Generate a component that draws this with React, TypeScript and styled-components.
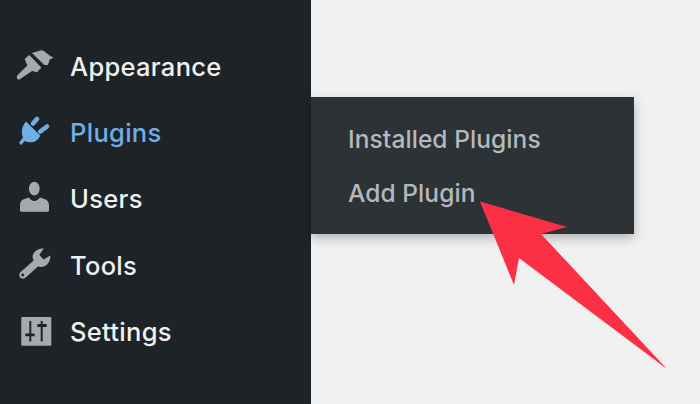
import React from "react";
import styled, { createGlobalStyle } from "styled-components";

const Global = createGlobalStyle`
  html, body { margin: 0; padding: 0; background: #f0f0f1; }
  body { font-family: Inter, "Liberation Sans", sans-serif; }
`;

const Page = styled.div`
  position: relative;
  width: 700px;
  height: 404px;
  overflow: hidden;
  display: flex;
  align-items: flex-start;
  background: #f0f0f1;
`;

const Sidebar = styled.nav`
  width: 311px;
  height: 404px;
  flex: none;
  box-sizing: border-box;
  padding: 33px 0 0 0;
  background: #1d2327;
  display: flex;
  flex-direction: column;
`;

const Row = styled.div<{ $active?: boolean }>`
  height: 66.3px;
  display: flex;
  align-items: center;
  gap: 16px;
  padding-left: 14px;
  color: ${(p) => (p.$active ? "#72aee6" : "#f0f0f1")};
  font-size: 25.5px;
  font-weight: 500;
  letter-spacing: 0.3px;
`;

const IconSlot = styled.svg<{ $active?: boolean }>`
  width: 40px;
  height: 40px;
  flex: none;
  color: ${(p) => (p.$active ? "#72aee6" : "#a7aaad")};
  fill: currentColor;
`;

const Flyout = styled.div`
  margin-top: 97px;
  width: 323px;
  height: 137px;
  box-sizing: border-box;
  padding: 15px 0 0 37px;
  background: #2d3237;
  box-shadow: 0 4px 10px rgba(0, 0, 0, 0.25);
  display: flex;
  flex-direction: column;
`;

const SubItem = styled.div`
  height: 54px;
  display: flex;
  align-items: center;
  color: #b4b9be;
  font-size: 24.5px;
  font-weight: 450;
  letter-spacing: 0.08px;
`;

const Arrow = styled.svg`
  position: absolute;
  left: 0;
  top: 0;
  width: 700px;
  height: 404px;
  fill: #fb3044;
  pointer-events: none;
`;

const icons = {
  Appearance: (
    <>
      <path d="M10.7 12.9 15.3 8.9 27.3 21.5 23 26.2 18 24.9 5.8 33.2C4.8 33.9 3.6 33.6 3 32.6 2.6 31.2 2.9 29.8 3.7 28.9L13.3 19.5Z" />
      <path d="M18 6.9 27.3 4.2C31 4.4 33 8.8 39.7 11.5L35.7 13.5 34 18.9 30.3 18.9Z" />
    </>
  ),
  Plugins: (
    <>
      <path d="M12 9.5 26.3 23.5C24.5 27.5 21.5 30 18 30.2 15.5 30.4 12.8 29.8 10.7 28.9L7.6 32.6C6.6 33.4 5.6 32 5.3 30.7 5.2 30.2 5.6 29.8 6 29.3L9 25.5C8 22.8 7.6 20.4 8 17.9 8.5 14.6 10 11.6 12 9.5Z" />
      <path d="M19 11.5 23 6.9M26.3 19.5 33 14.5" stroke="currentColor" strokeWidth="4.6" strokeLinecap="round" />
    </>
  ),
  Users: (
    <>
      <ellipse cx="20.3" cy="9.6" rx="5.4" ry="6.8" />
      <path d="M14.7 18.6C16.5 20.6 18.2 22 20.3 22 22.4 22 24.1 20.6 26 18.6L31 20.2C33.6 21 35 23.3 35 26.6V31.6C35 32.2 34.4 32.8 33.8 32.8H7.2C6.6 32.8 6 32.2 6 31.6V26.6C6 23.3 7.2 21 9.8 20.2Z" />
    </>
  ),
  Tools: (
    <path
      fillRule="evenodd"
      d="M6.3 27.3 19.7 15.6C18.6 13.2 18.5 12 18.7 10.6 19.4 7.6 21 6.2 23 5.2 25.2 4 27.4 3.6 29.7 3.6L25.3 10 29.7 14.6 36.3 10.6C36.5 13 35.9 15.4 34.7 17.3 33.4 19.6 31.8 21 29.7 21.6 27.8 22.2 25.8 22.2 24 21.6L12 32.3C10.5 33.9 8.4 34.2 6.7 33 4.9 31.6 4.8 29 6.3 27.3ZM8.7 28.6A1.4 1.4 0 1 0 8.71 31.4 1.4 1.4 0 0 0 8.7 28.6Z"
    />
  ),
  Settings: (
    <path
      fillRule="evenodd"
      d="M8.3 6H36.3C36.9 6 37.3 6.4 37.3 7V33.7C37.3 34.3 36.9 34.7 36.3 34.7H8.3C7.7 34.7 7.3 34.3 7.3 33.7V7C7.3 6.4 7.7 6 8.3 6ZM15.3 10V22.4H11.3V25.2H15.3V30.5H17.3V25.2H20.7V22.4H17.3V10ZM26.7 10V13H23.3V16H26.7V30.5H28.7V16H32.7V13H28.7V10Z"
    />
  ),
};

const items = ["Appearance", "Plugins", "Users", "Tools", "Settings"] as const;

export default function App() {
  return (
    <Page>
      <Global />
      <Sidebar>
        {items.map((name) => (
          <Row key={name} $active={name === "Plugins"}>
            <IconSlot viewBox="0 0 40 40" $active={name === "Plugins"}>
              {icons[name]}
            </IconSlot>
            {name}
          </Row>
        ))}
      </Sidebar>
      <Flyout>
        <SubItem>Installed Plugins</SubItem>
        <SubItem>Add Plugin</SubItem>
      </Flyout>
      <Arrow viewBox="0 0 700 404">
        <polygon points="480,201.5 567,227 541,234 667,369 519,258 514,285" />
      </Arrow>
    </Page>
  );
}
